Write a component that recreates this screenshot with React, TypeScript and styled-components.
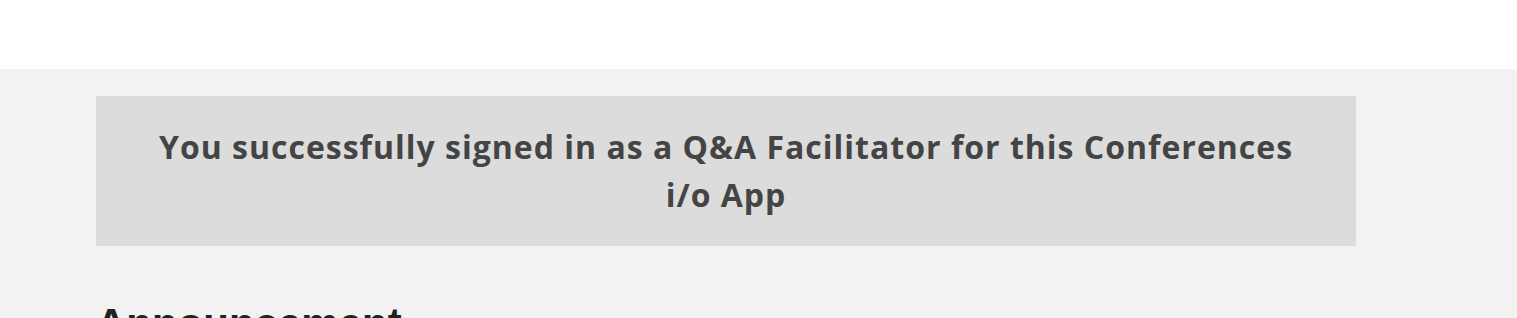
import styled, { createGlobalStyle } from "styled-components";

const GlobalStyle = createGlobalStyle`
  html, body {
    margin: 0;
    padding: 0;
    background: #ffffff;
  }
`;

const Page = styled.div`
  padding-top: 69px;
`;

const Main = styled.main`
  background: #f2f2f2;
  padding: 27px 0 40px 96px;
  min-height: 300px;
`;

const Notice = styled.div`
  width: 1260px;
  box-sizing: border-box;
  background: #dcdcdc;
  padding: 27px 40px;
  text-align: center;
`;

const NoticeText = styled.p`
  margin: 0;
  font-family: "Open Sans", sans-serif;
  font-weight: 700;
  font-size: 32px;
  line-height: 48px;
  color: #444444;
  letter-spacing: 1px;
`;

const SectionTitle = styled.h2`
  margin: 54px 0 0;
  font-family: "Liberation Sans", Arial, sans-serif;
  font-weight: 700;
  font-size: 42px;
  color: #222222;
`;

const App = () => {
  return (
    <Page>
      <GlobalStyle />
      <Main>
        <Notice>
          <NoticeText>
            You successfully signed in as a Q&amp;A Facilitator for this
            Conferences i/o App
          </NoticeText>
        </Notice>
        <SectionTitle>Announcement</SectionTitle>
      </Main>
    </Page>
  );
};

export default App;
